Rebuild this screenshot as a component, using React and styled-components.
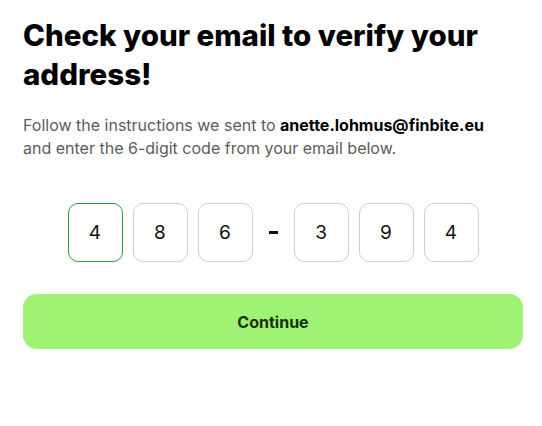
import React from "react";
import styled, { createGlobalStyle } from "styled-components";

const GlobalStyle = createGlobalStyle`
  body {
    margin: 0;
    background: #ffffff;
    font-family: Inter, "Noto Sans", sans-serif;
  }
`;

const Page = styled.div`
  display: flex;
  flex-direction: column;
  padding: 16px 19px 0 23px;
  width: 542px;
  box-sizing: border-box;
`;

const Title = styled.h1`
  margin: 0;
  font-size: 29.5px;
  line-height: 39px;
  font-weight: 800;
  color: #000;
`;

const Intro = styled.p`
  margin: 20px 0 0;
  font-size: 16px;
  line-height: 23px;
  color: #5c5c5c;

  strong {
    color: #000;
    font-weight: 700;
  }
`;

const CodeRow = styled.div`
  display: flex;
  align-items: center;
  justify-content: center;
  gap: 10px;
  margin-top: 43px;
`;

const Digit = styled.div`
  width: 55px;
  height: 59px;
  box-sizing: border-box;
  border: 1px solid ${(p) => (p.$active ? "#2f9a3a" : "#cfcfcf")};
  border-radius: 10px;
  display: flex;
  align-items: center;
  justify-content: center;
  font-size: 19px;
  color: #111;
`;

const Dash = styled.span`
  width: 21px;
  display: flex;
  justify-content: center;

  &::before {
    content: "";
    width: 9px;
    height: 3px;
    background: #111;
  }
`;

const Button = styled.button`
  margin-top: 32px;
  height: 55px;
  border: none;
  border-radius: 14px;
  background: #a0f274;
  color: #16300a;
  font-family: Inter, "Noto Sans", sans-serif;
  font-size: 16px;
  font-weight: 700;
  cursor: pointer;
`;

export default function App() {
  const first = ["4", "8", "6"];
  const second = ["3", "9", "4"];
  return (
    <>
      <GlobalStyle />
      <Page>
        <Title>Check your email to verify your address!</Title>
        <Intro>
          Follow the instructions we sent to <strong>anette.lohmus@finbite.eu</strong>
          <br />
          and enter the 6-digit code from your email below.
        </Intro>
        <CodeRow>
          {first.map((d, i) => (
            <Digit key={"a" + i} $active={i === 0}>
              {d}
            </Digit>
          ))}
          <Dash />
          {second.map((d, i) => (
            <Digit key={"b" + i}>{d}</Digit>
          ))}
        </CodeRow>
        <Button>Continue</Button>
      </Page>
    </>
  );
}
